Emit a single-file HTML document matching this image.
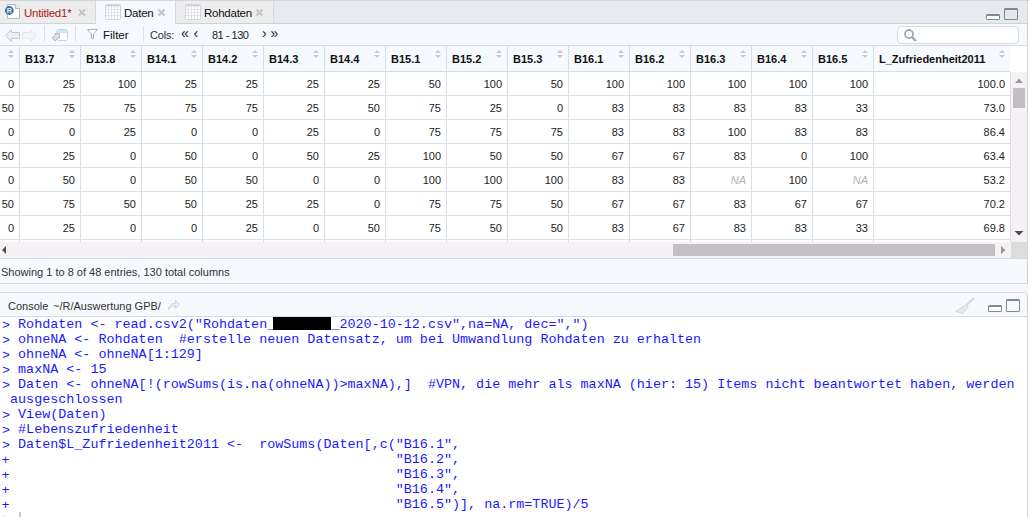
<!DOCTYPE html>
<html><head><meta charset="utf-8">
<style>
*{box-sizing:border-box;margin:0;padding:0}
html,body{width:1029px;height:517px;overflow:hidden;background:#fff}
body{position:relative;font-family:"Liberation Sans",sans-serif;font-size:11px;color:#000}
.a{position:absolute;white-space:nowrap}
svg{position:absolute;overflow:visible}
.tab{position:absolute;top:1px;height:23px;background:#ededed;border-right:1px solid #d6d9dc;border-bottom:1px solid #cdd2d7;border-top-right-radius:1px}
.tab.active{background:#f6f9fd;border-bottom:none}
.tt{position:absolute;top:7px;font-size:11.5px;line-height:13px;letter-spacing:-0.25px}
.hc{position:absolute;top:0;height:26px;border-right:1px solid #d8dde2}
.ht{position:absolute;left:6px;top:7px;font-weight:bold;font-size:11px;line-height:13px;white-space:nowrap;color:#111}
.sort{position:absolute;right:5px;top:4px;width:6px;height:9px}
.sort:before{content:"";position:absolute;left:0;top:0;border-left:3px solid transparent;border-right:3px solid transparent;border-bottom:3.5px solid #c7cbcf}
.sort:after{content:"";position:absolute;left:0;top:4.5px;border-left:3px solid transparent;border-right:3px solid transparent;border-top:3.5px solid #c7cbcf}
.c{position:absolute;height:24px;border-right:1px solid #dadfe3;border-bottom:1px solid #dadfe3;text-align:right;padding-right:5px;padding-top:6px;line-height:13px;font-size:11px;white-space:nowrap;color:#222}
.c.na{color:#b4b4b4;font-style:italic}
.con{position:absolute;left:2px;top:317px;font-family:"Liberation Mono",monospace;font-size:13.4px;line-height:15px;color:#1a1aff;white-space:pre}
</style></head><body>
<!-- top / tabbar -->
<div class="a" style="left:0;top:0;width:1029px;height:1px;background:#d4d8dc"></div>
<div class="a" style="left:0;top:1px;width:1027px;height:23px;background:#e6e9ed;border-bottom:1px solid #cdd2d7"></div>
<div class="tab" style="left:0;width:96px"></div>
<div class="tab active" style="left:96px;width:80px"></div>
<div class="tab" style="left:176px;width:98px"></div>
<!-- R doc icon -->
<svg style="left:0;top:0" width="30" height="24">
  <path d="M7.5 4.5 H15.5 L19.5 8.5 V18.5 H7.5 Z" fill="#fff" stroke="#b4b9be" stroke-width="1"/>
  <path d="M15.5 4.5 V8.5 H19.5" fill="#eef0f2" stroke="#b4b9be" stroke-width="1"/>
  <circle cx="9.3" cy="10.5" r="4.4" fill="#3f72aa"/>
  <text x="9.4" y="13.4" font-family="Liberation Sans" font-size="7" font-weight="bold" fill="#e8eef5" text-anchor="middle">R</text>
</svg>
<span class="a tt" style="left:24px;color:#b01a22">Untitled1*</span>
<!-- grid icons -->
<svg style="left:105px;top:4px" width="16" height="16" id="grid1">
  <rect x="0.5" y="0.5" width="15" height="15" rx="1" fill="#fff" stroke="#cfd5dc"/>
  <rect x="1" y="1" width="14" height="1.5" fill="#ccd3db"/>
  <path d="M3.5 2.5 V15 M6.5 2.5 V15 M9.5 2.5 V15 M12.5 2.5 V15 M1 5.5 H15 M1 8.5 H15 M1 11.5 H15" stroke="#e0e4e9" stroke-width="1"/>
</svg>
<svg style="left:185px;top:4px" width="16" height="16">
  <rect x="0.5" y="0.5" width="15" height="15" rx="1" fill="#fff" stroke="#cfd5dc"/>
  <rect x="1" y="1" width="14" height="1.5" fill="#ccd3db"/>
  <path d="M3.5 2.5 V15 M6.5 2.5 V15 M9.5 2.5 V15 M12.5 2.5 V15 M1 5.5 H15 M1 8.5 H15 M1 11.5 H15" stroke="#e0e4e9" stroke-width="1"/>
</svg>
<span class="a tt" style="left:124px;color:#111">Daten</span>
<span class="a tt" style="left:204px;color:#111">Rohdaten</span>
<!-- close x -->
<svg style="left:0;top:0" width="280" height="24">
  <path d="M79 9.5 L85 15.5 M85 9.5 L79 15.5" stroke="#c4c4c4" stroke-width="2"/>
  <path d="M158.5 9.5 L164.5 15.5 M164.5 9.5 L158.5 15.5" stroke="#c4c4c4" stroke-width="2"/>
  <path d="M256.5 9.5 L262.5 15.5 M262.5 9.5 L256.5 15.5" stroke="#c4c4c4" stroke-width="2"/>
</svg>
<!-- min/max pane icons -->
<svg style="left:980px;top:0" width="49" height="24">
  <rect x="6.5" y="14.5" width="13" height="5" rx="0.5" fill="#fff" stroke="#7d8b8c"/>
  <rect x="7" y="14" width="12" height="2" fill="#7d8b8c"/>
  <rect x="24.5" y="8.5" width="13" height="11" rx="0.5" fill="#e4e7ea" stroke="#7d8b8c"/>
  <rect x="25" y="8" width="12" height="2" fill="#7d8b8c"/>
</svg>
<!-- toolbar -->
<div class="a" style="left:0;top:24px;width:1027px;height:22px;background:#f6f9fd;border-bottom:1px solid #d5dade"></div>
<svg style="left:0;top:24px" width="140" height="22">
  <path d="M5.5 11.5 L11.5 5.5 V8.5 H19.5 V14.5 H11.5 V17.5 Z" fill="#eeedf5" stroke="#c5c7cc" stroke-linejoin="round"/>
  <path d="M36.5 11.5 L30.5 5.5 V8.5 H22.5 V14.5 H30.5 V17.5 Z" fill="#f4f4f6" stroke="#e3e6e8" stroke-linejoin="round"/>
  <path d="M44.5 2 V17.5" stroke="#dde1e5"/>
  <path d="M56.5 7.5 Q56.5 5.5 58.5 5.5 H65.5 Q67.5 5.5 67.5 7.5 V14.5 Q67.5 16.5 65.5 16.5 H58.5 Q56.5 16.5 56.5 14.5 Z" fill="#fff" stroke="#cdd2d8"/>
  <path d="M57 6 H67 V9 H57 Z" fill="#cfe4f8"/>
  <path d="M52 14 L55.5 10.5 L54.5 9.5 L59.5 9.5 L59.5 14.5 L58.5 13.5 L55 17 Z" fill="#d9dee3" stroke="#a9b1b8" stroke-width="0.8" stroke-linejoin="round"/>
  <path d="M75.5 2 V17.5" stroke="#dde1e5"/>
  <path d="M87.5 5.5 H97.5 L93.5 10 V14.5 H91.5 V10 Z" fill="#fff" stroke="#a9b1b6" stroke-linejoin="round"/>
  <path d="M143.5 2 V17.5" stroke="#dde1e5"/>
</svg>
<span class="a" style="left:103px;top:29px;font-size:11.5px;line-height:13px;color:#111">Filter</span>
<span class="a" style="left:150px;top:29px;font-size:11px;line-height:13px;color:#333;letter-spacing:-0.2px">Cols:</span>
<span class="a" style="left:181px;top:26px;font-size:14px;line-height:14px;color:#222">«</span>
<span class="a" style="left:193.5px;top:26px;font-size:14px;line-height:14px;color:#222">‹</span>
<span class="a" style="left:212px;top:29px;font-size:11px;line-height:13px;color:#222;letter-spacing:-0.5px">81 - 130</span>
<span class="a" style="left:262px;top:26px;font-size:14px;line-height:14px;color:#222">›</span>
<span class="a" style="left:270.5px;top:26px;font-size:14px;line-height:14px;color:#222">»</span>
<div class="a" style="left:897px;top:26px;width:122px;height:18px;background:#fff;border:1px solid #d9dce0;border-radius:4px"></div>
<svg style="left:900px;top:26px" width="24" height="18">
  <circle cx="9" cy="8" r="4" fill="none" stroke="#a3abb1" stroke-width="1.8"/>
  <path d="M11.8 10.8 L16 15" stroke="#a3abb1" stroke-width="2.4"/>
</svg>
<!-- table header -->
<div class="a" style="left:0;top:46px;width:1010px;height:26px;background:#f6f9fd;border-bottom:1px solid #d8dde2">
<div class="hc" style="left:-42px;width:62px"><span class="ht"></span><span class="sort"></span></div>
<div class="hc" style="left:19px;width:62px"><span class="ht">B13.7</span><span class="sort"></span></div>
<div class="hc" style="left:80px;width:62px"><span class="ht">B13.8</span><span class="sort"></span></div>
<div class="hc" style="left:141px;width:62px"><span class="ht">B14.1</span><span class="sort"></span></div>
<div class="hc" style="left:202px;width:62px"><span class="ht">B14.2</span><span class="sort"></span></div>
<div class="hc" style="left:263px;width:62px"><span class="ht">B14.3</span><span class="sort"></span></div>
<div class="hc" style="left:324px;width:62px"><span class="ht">B14.4</span><span class="sort"></span></div>
<div class="hc" style="left:385px;width:62px"><span class="ht">B15.1</span><span class="sort"></span></div>
<div class="hc" style="left:446px;width:62px"><span class="ht">B15.2</span><span class="sort"></span></div>
<div class="hc" style="left:507px;width:62px"><span class="ht">B15.3</span><span class="sort"></span></div>
<div class="hc" style="left:568px;width:62px"><span class="ht">B16.1</span><span class="sort"></span></div>
<div class="hc" style="left:629px;width:62px"><span class="ht">B16.2</span><span class="sort"></span></div>
<div class="hc" style="left:690px;width:62px"><span class="ht">B16.3</span><span class="sort"></span></div>
<div class="hc" style="left:751px;width:62px"><span class="ht">B16.4</span><span class="sort"></span></div>
<div class="hc" style="left:812px;width:62px"><span class="ht">B16.5</span><span class="sort"></span></div>
<div class="hc" style="left:873px;width:138px"><span class="ht">L_Zufriedenheit2011</span><span class="sort"></span></div>
</div>
<div class="a" style="left:1010px;top:46px;width:17px;height:26px;background:#fff"></div>
<!-- table body -->
<div class="a" style="left:0;top:72px;width:1011px;height:170px;overflow:hidden;background:#fff">
<div class="c" style="left:-42px;top:0px;width:62px">0</div>
<div class="c" style="left:19px;top:0px;width:62px">25</div>
<div class="c" style="left:80px;top:0px;width:62px">100</div>
<div class="c" style="left:141px;top:0px;width:62px">25</div>
<div class="c" style="left:202px;top:0px;width:62px">25</div>
<div class="c" style="left:263px;top:0px;width:62px">25</div>
<div class="c" style="left:324px;top:0px;width:62px">25</div>
<div class="c" style="left:385px;top:0px;width:62px">50</div>
<div class="c" style="left:446px;top:0px;width:62px">100</div>
<div class="c" style="left:507px;top:0px;width:62px">50</div>
<div class="c" style="left:568px;top:0px;width:62px">100</div>
<div class="c" style="left:629px;top:0px;width:62px">100</div>
<div class="c" style="left:690px;top:0px;width:62px">100</div>
<div class="c" style="left:751px;top:0px;width:62px">100</div>
<div class="c" style="left:812px;top:0px;width:62px">100</div>
<div class="c" style="left:873px;top:0px;width:138px">100.0</div>
<div class="c" style="left:-42px;top:24px;width:62px">50</div>
<div class="c" style="left:19px;top:24px;width:62px">75</div>
<div class="c" style="left:80px;top:24px;width:62px">75</div>
<div class="c" style="left:141px;top:24px;width:62px">75</div>
<div class="c" style="left:202px;top:24px;width:62px">75</div>
<div class="c" style="left:263px;top:24px;width:62px">25</div>
<div class="c" style="left:324px;top:24px;width:62px">50</div>
<div class="c" style="left:385px;top:24px;width:62px">75</div>
<div class="c" style="left:446px;top:24px;width:62px">25</div>
<div class="c" style="left:507px;top:24px;width:62px">0</div>
<div class="c" style="left:568px;top:24px;width:62px">83</div>
<div class="c" style="left:629px;top:24px;width:62px">83</div>
<div class="c" style="left:690px;top:24px;width:62px">83</div>
<div class="c" style="left:751px;top:24px;width:62px">83</div>
<div class="c" style="left:812px;top:24px;width:62px">33</div>
<div class="c" style="left:873px;top:24px;width:138px">73.0</div>
<div class="c" style="left:-42px;top:48px;width:62px">0</div>
<div class="c" style="left:19px;top:48px;width:62px">0</div>
<div class="c" style="left:80px;top:48px;width:62px">25</div>
<div class="c" style="left:141px;top:48px;width:62px">0</div>
<div class="c" style="left:202px;top:48px;width:62px">0</div>
<div class="c" style="left:263px;top:48px;width:62px">25</div>
<div class="c" style="left:324px;top:48px;width:62px">0</div>
<div class="c" style="left:385px;top:48px;width:62px">75</div>
<div class="c" style="left:446px;top:48px;width:62px">75</div>
<div class="c" style="left:507px;top:48px;width:62px">75</div>
<div class="c" style="left:568px;top:48px;width:62px">83</div>
<div class="c" style="left:629px;top:48px;width:62px">83</div>
<div class="c" style="left:690px;top:48px;width:62px">100</div>
<div class="c" style="left:751px;top:48px;width:62px">83</div>
<div class="c" style="left:812px;top:48px;width:62px">83</div>
<div class="c" style="left:873px;top:48px;width:138px">86.4</div>
<div class="c" style="left:-42px;top:72px;width:62px">50</div>
<div class="c" style="left:19px;top:72px;width:62px">25</div>
<div class="c" style="left:80px;top:72px;width:62px">0</div>
<div class="c" style="left:141px;top:72px;width:62px">50</div>
<div class="c" style="left:202px;top:72px;width:62px">0</div>
<div class="c" style="left:263px;top:72px;width:62px">50</div>
<div class="c" style="left:324px;top:72px;width:62px">25</div>
<div class="c" style="left:385px;top:72px;width:62px">100</div>
<div class="c" style="left:446px;top:72px;width:62px">50</div>
<div class="c" style="left:507px;top:72px;width:62px">50</div>
<div class="c" style="left:568px;top:72px;width:62px">67</div>
<div class="c" style="left:629px;top:72px;width:62px">67</div>
<div class="c" style="left:690px;top:72px;width:62px">83</div>
<div class="c" style="left:751px;top:72px;width:62px">0</div>
<div class="c" style="left:812px;top:72px;width:62px">100</div>
<div class="c" style="left:873px;top:72px;width:138px">63.4</div>
<div class="c" style="left:-42px;top:96px;width:62px">0</div>
<div class="c" style="left:19px;top:96px;width:62px">50</div>
<div class="c" style="left:80px;top:96px;width:62px">0</div>
<div class="c" style="left:141px;top:96px;width:62px">50</div>
<div class="c" style="left:202px;top:96px;width:62px">50</div>
<div class="c" style="left:263px;top:96px;width:62px">0</div>
<div class="c" style="left:324px;top:96px;width:62px">0</div>
<div class="c" style="left:385px;top:96px;width:62px">100</div>
<div class="c" style="left:446px;top:96px;width:62px">100</div>
<div class="c" style="left:507px;top:96px;width:62px">100</div>
<div class="c" style="left:568px;top:96px;width:62px">83</div>
<div class="c" style="left:629px;top:96px;width:62px">83</div>
<div class="c na" style="left:690px;top:96px;width:62px">NA</div>
<div class="c" style="left:751px;top:96px;width:62px">100</div>
<div class="c na" style="left:812px;top:96px;width:62px">NA</div>
<div class="c" style="left:873px;top:96px;width:138px">53.2</div>
<div class="c" style="left:-42px;top:120px;width:62px">50</div>
<div class="c" style="left:19px;top:120px;width:62px">75</div>
<div class="c" style="left:80px;top:120px;width:62px">50</div>
<div class="c" style="left:141px;top:120px;width:62px">50</div>
<div class="c" style="left:202px;top:120px;width:62px">25</div>
<div class="c" style="left:263px;top:120px;width:62px">25</div>
<div class="c" style="left:324px;top:120px;width:62px">0</div>
<div class="c" style="left:385px;top:120px;width:62px">75</div>
<div class="c" style="left:446px;top:120px;width:62px">75</div>
<div class="c" style="left:507px;top:120px;width:62px">50</div>
<div class="c" style="left:568px;top:120px;width:62px">67</div>
<div class="c" style="left:629px;top:120px;width:62px">67</div>
<div class="c" style="left:690px;top:120px;width:62px">83</div>
<div class="c" style="left:751px;top:120px;width:62px">67</div>
<div class="c" style="left:812px;top:120px;width:62px">67</div>
<div class="c" style="left:873px;top:120px;width:138px">70.2</div>
<div class="c" style="left:-42px;top:144px;width:62px">0</div>
<div class="c" style="left:19px;top:144px;width:62px">25</div>
<div class="c" style="left:80px;top:144px;width:62px">0</div>
<div class="c" style="left:141px;top:144px;width:62px">0</div>
<div class="c" style="left:202px;top:144px;width:62px">25</div>
<div class="c" style="left:263px;top:144px;width:62px">0</div>
<div class="c" style="left:324px;top:144px;width:62px">50</div>
<div class="c" style="left:385px;top:144px;width:62px">75</div>
<div class="c" style="left:446px;top:144px;width:62px">50</div>
<div class="c" style="left:507px;top:144px;width:62px">50</div>
<div class="c" style="left:568px;top:144px;width:62px">83</div>
<div class="c" style="left:629px;top:144px;width:62px">67</div>
<div class="c" style="left:690px;top:144px;width:62px">83</div>
<div class="c" style="left:751px;top:144px;width:62px">83</div>
<div class="c" style="left:812px;top:144px;width:62px">33</div>
<div class="c" style="left:873px;top:144px;width:138px">69.8</div>
<div class="c" style="left:-42px;top:168px;width:62px"></div>
<div class="c" style="left:19px;top:168px;width:62px"></div>
<div class="c" style="left:80px;top:168px;width:62px"></div>
<div class="c" style="left:141px;top:168px;width:62px"></div>
<div class="c" style="left:202px;top:168px;width:62px"></div>
<div class="c" style="left:263px;top:168px;width:62px"></div>
<div class="c" style="left:324px;top:168px;width:62px"></div>
<div class="c" style="left:385px;top:168px;width:62px"></div>
<div class="c" style="left:446px;top:168px;width:62px"></div>
<div class="c" style="left:507px;top:168px;width:62px"></div>
<div class="c" style="left:568px;top:168px;width:62px"></div>
<div class="c" style="left:629px;top:168px;width:62px"></div>
<div class="c" style="left:690px;top:168px;width:62px"></div>
<div class="c" style="left:751px;top:168px;width:62px"></div>
<div class="c" style="left:812px;top:168px;width:62px"></div>
<div class="c" style="left:873px;top:168px;width:138px"></div>
</div>
<!-- vertical scrollbar -->
<div class="a" style="left:1011px;top:72px;width:16px;height:170px;background:#f6f1f4"></div>
<svg style="left:1011px;top:72px" width="16" height="170">
  <path d="M4 11 L8 6.5 L12 11 Z" fill="#9a9a9a"/>
  <rect x="2" y="16" width="12" height="20" fill="#c2bfc2"/>
  <path d="M3.5 159 L8 163.5 L12.5 159 Z" fill="#505050"/>
</svg>
<!-- horizontal scrollbar -->
<div class="a" style="left:0;top:242px;width:1011px;height:16px;background:#f6f1f4"></div>
<svg style="left:0;top:242px" width="1011" height="16">
  <path d="M6 4 L2 8 L6 12 Z" fill="#505050"/>
  <rect x="673" y="2" width="322" height="12" fill="#c3c0c3"/>
  <path d="M1001 3.8 L1005.3 8 L1001 12.2 Z" fill="#9a9a9a"/>
</svg>
<div class="a" style="left:1011px;top:242px;width:16px;height:16px;background:#dcdcdc"></div>
<!-- status -->
<div class="a" style="left:0;top:258px;width:1027px;height:26px;background:#f6f9fd;border-top:1px solid #d8dbde;border-bottom:1px solid #d8dbde"></div>
<span class="a" style="left:1px;top:266px;font-size:11px;line-height:13px;color:#333">Showing 1 to 8 of 48 entries, 130 total columns</span>
<div class="a" style="left:1027px;top:1px;width:1px;height:283px;background:#d0d4d8"></div>
<!-- gap -->
<div class="a" style="left:0;top:284px;width:1029px;height:8px;background:#f6f5f9"></div>
<!-- console header -->
<div class="a" style="left:0;top:292px;width:1028px;height:25px;background:#f6f9fd;border-top:1px solid #d8dbde;border-right:1px solid #d0d4d8;border-bottom:1px solid #d8dbde;border-top-right-radius:4px"></div>
<span class="a" style="left:8px;top:300px;font-size:11px;line-height:13px;color:#333">Console</span>
<span class="a" style="left:53px;top:300px;font-size:11px;line-height:13px;color:#333">~/R/Auswertung GPB/</span>
<svg style="left:166px;top:298px" width="16" height="14">
  <path d="M2.5 11.5 Q3 5.5 9.5 5.5 V2.5 L13.5 6.5 L9.5 10.5 V7.5 Q5 7.5 2.5 11.5 Z" fill="#f2f4f7" stroke="#d0d5da" stroke-linejoin="round"/>
</svg>
<svg style="left:940px;top:285px" width="89" height="32">
  <path d="M33.5 13.5 L26 20.5" stroke="#d4d8dc" stroke-width="2" stroke-linecap="round"/>
  <path d="M26.5 19.5 L28 22.5 L23 28.5 L15.5 26.5 Z" fill="#e6e7ef" stroke="#d4d8dc" stroke-linejoin="round"/>
  <rect x="48.5" y="20.5" width="13" height="6" rx="0.5" fill="#fff" stroke="#7d8b8c"/>
  <rect x="49" y="20" width="12" height="2" fill="#7d8b8c"/>
  <rect x="66.5" y="14.5" width="13" height="12" rx="0.5" fill="#f6f9fd" stroke="#7d8b8c"/>
  <rect x="67" y="14" width="12" height="2" fill="#7d8b8c"/>
</svg>
<!-- console body -->
<div class="a" style="left:1027px;top:317px;width:1px;height:200px;background:#d0d4d8"></div>
<div class="con"><span style="position:relative;top:1px">&gt;</span> Rohdaten &lt;- read.csv2("Rohdaten_       _2020-10-12.csv",na=NA, dec=",")
<span style="position:relative;top:1px">&gt;</span> ohneNA &lt;- Rohdaten  #erstelle neuen Datensatz, um bei Umwandlung Rohdaten zu erhalten
<span style="position:relative;top:1px">&gt;</span> ohneNA &lt;- ohneNA[1:129]
<span style="position:relative;top:1px">&gt;</span> maxNA &lt;- 15
<span style="position:relative;top:1px">&gt;</span> Daten &lt;- ohneNA[!(rowSums(is.na(ohneNA))&gt;maxNA),]  #VPN, die mehr als maxNA (hier: 15) Items nicht beantwortet haben, werden
 ausgeschlossen
<span style="position:relative;top:1px">&gt;</span> View(Daten)
<span style="position:relative;top:1px">&gt;</span> #Lebenszufriedenheit
<span style="position:relative;top:1px">&gt;</span> Daten$L_Zufriedenheit2011 &lt;-  rowSums(Daten[,c("B16.1",
<span style="position:relative;top:1px;left:-0.5px">+</span>                                                "B16.2",
<span style="position:relative;top:1px;left:-0.5px">+</span>                                                "B16.3",
<span style="position:relative;top:1px;left:-0.5px">+</span>                                                "B16.4",
<span style="position:relative;top:1px;left:-0.5px">+</span>                                                "B16.5")], na.rm=TRUE)/5
<span style="position:relative;top:1px">&gt;</span> </div>
<div class="a" style="left:273px;top:317px;width:58px;height:13px;background:#000"></div>
<div class="a" style="left:19px;top:512px;width:2px;height:5px;background:#c8c8c8"></div>
</body></html>
